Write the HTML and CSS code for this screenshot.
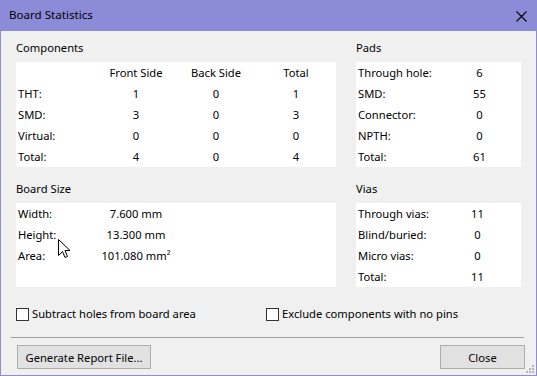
FILE: index.html
```html
<!DOCTYPE html>
<html lang="en">
<head>
    <meta charset="UTF-8">
    <title>Board Statistics</title>
    <link rel="stylesheet" href="styles.css">
</head>
<body>
    <div class="window">
        <div class="titlebar">
            <span class="title">Board Statistics</span>
            <svg class="close" width="11" height="11" viewBox="0 0 11 11">
                <path d="M0.5 0.5 L10.5 10.5 M10.5 0.5 L0.5 10.5" stroke="#000" stroke-width="1.1" fill="none"/>
            </svg>
        </div>
        <div class="content">
            <div class="sections">
                <div class="section">
                    <div class="section-label">Components</div>
                    <div class="box comp-table">
                        <span></span><span class="val">Front Side</span><span class="val">Back Side</span><span class="val">Total</span>
                        <span class="lbl">THT:</span><span class="val">1</span><span class="val">0</span><span class="val">1</span>
                        <span class="lbl">SMD:</span><span class="val">3</span><span class="val">0</span><span class="val">3</span>
                        <span class="lbl">Virtual:</span><span class="val">0</span><span class="val">0</span><span class="val">0</span>
                        <span class="lbl">Total:</span><span class="val">4</span><span class="val">0</span><span class="val">4</span>
                    </div>
                </div>
                <div class="section">
                    <div class="section-label">Pads</div>
                    <div class="box pads-table">
                        <span class="lbl">Through hole:</span><span class="val">6</span>
                        <span class="lbl">SMD:</span><span class="val">55</span>
                        <span class="lbl">Connector:</span><span class="val">0</span>
                        <span class="lbl">NPTH:</span><span class="val">0</span>
                        <span class="lbl">Total:</span><span class="val">61</span>
                    </div>
                </div>
                <div class="section">
                    <div class="section-label">Board Size</div>
                    <div class="box size-table">
                        <span class="lbl">Width:</span><span class="val">7.600 mm</span>
                        <span class="lbl">Height:</span><span class="val">13.300 mm</span>
                        <span class="lbl">Area:</span><span class="val">101.080 mm²</span>
                        <span></span><span></span>
                    </div>
                    <svg class="cursor" width="13" height="20" viewBox="0 0 13 20">
                        <path d="M0.5 0.5 L0.5 16.5 L4.5 12.5 L7 18.5 L9.5 17.5 L7 11.5 L12 11.5 Z" fill="#fff" stroke="#000" stroke-width="1"/>
                    </svg>
                </div>
                <div class="section">
                    <div class="section-label">Vias</div>
                    <div class="box vias-table">
                        <span class="lbl">Through vias:</span><span class="val">11</span>
                        <span class="lbl">Blind/buried:</span><span class="val">0</span>
                        <span class="lbl">Micro vias:</span><span class="val">0</span>
                        <span class="lbl">Total:</span><span class="val">11</span>
                    </div>
                </div>
            </div>

            <div class="options">
                <label class="check"><span class="checkbox"></span>Subtract holes from board area</label>
                <label class="check"><span class="checkbox"></span>Exclude components with no pins</label>
            </div>

            <div class="separator"></div>

            <div class="buttons">
                <button class="btn-report">Generate Report File...</button>
                <button class="btn-close">Close</button>
            </div>
        </div>
        <svg class="grip" width="9" height="9" viewBox="0 0 9 9">
            <rect x="6" y="0" width="2" height="2" fill="#b4b4b4"/>
            <rect x="3" y="3" width="2" height="2" fill="#b4b4b4"/>
            <rect x="6" y="3" width="2" height="2" fill="#b4b4b4"/>
            <rect x="0" y="6" width="2" height="2" fill="#b4b4b4"/>
            <rect x="3" y="6" width="2" height="2" fill="#b4b4b4"/>
            <rect x="6" y="6" width="2" height="2" fill="#b4b4b4"/>
        </svg>
    </div>
</body>
</html>
```

FILE: styles.css
```css
body {
    margin: 0;
    font-family: "Noto Sans", "Open Sans", sans-serif;
    font-size: 11.2px;
    color: #000;
}
.window {
    position: relative;
    width: 537px;
    height: 376px;
    background-color: #f0f0f0;
}
.titlebar {
    height: 31px;
    background-color: #8c8bd8;
    display: flex;
    align-items: center;
    justify-content: space-between;
    padding: 0 10px 0 9px;
}
.title {
    font-size: 11.6px;
    line-height: 16px;
    margin-top: -1px;
}
.close {
    display: block;
    margin-top: 1px;
}
.content {
    height: 345px;
    box-sizing: border-box;
    border: 1px solid #8c8bd8;
    border-top: none;
    padding: 9px 15px 0 15px;
}
.sections {
    display: grid;
    grid-template-columns: 320px 165px;
    column-gap: 20px;
    row-gap: 14px;
}
.section {
    position: relative;
}
.section-label {
    line-height: 16px;
    margin-bottom: 6px;
}
.box {
    background-color: #fff;
    display: grid;
    grid-auto-rows: 21px;
    align-items: center;
}
.comp-table {
    grid-template-columns: 80px 80px 80px 80px;
}
.pads-table {
    grid-template-columns: 82px 83px;
}
.size-table {
    grid-template-columns: 80px 80px;
}
.vias-table {
    grid-template-columns: 78px 87px;
}
.lbl {
    padding-left: 2px;
    white-space: nowrap;
}
.val {
    text-align: center;
    white-space: nowrap;
}
.cursor {
    position: absolute;
    left: 42px;
    top: 58px;
}
.options {
    display: grid;
    grid-template-columns: 250px 1fr;
    margin-top: 19px;
    height: 16px;
}
.check {
    display: flex;
    align-items: center;
    line-height: 16px;
}
.checkbox {
    width: 11px;
    height: 11px;
    border: 1px solid #333;
    background-color: #fff;
    margin-right: 3px;
}
.separator {
    height: 1px;
    background-color: #a0a0a0;
    margin: 15px -3px 0 -5px;
}
.buttons {
    display: flex;
    justify-content: space-between;
    margin: 7px -4px 0 1px;
}
button {
    font-family: inherit;
    font-size: 11.2px;
    height: 24px;
    background-color: #e1e1e1;
    border: 1px solid #adadad;
    padding: 0;
    color: #000;
}
.btn-report {
    width: 134px;
}
.btn-close {
    width: 85px;
}
.grip {
    position: absolute;
    right: 2px;
    bottom: 2px;
}
```
